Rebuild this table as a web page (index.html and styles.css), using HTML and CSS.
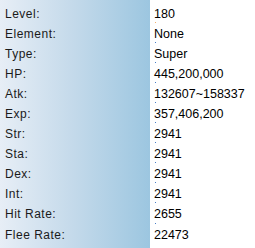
FILE: index.html
```html
<!DOCTYPE html>
<html>
<head>
<meta charset="utf-8">
<link rel="stylesheet" href="styles.css">
</head>
<body>
<div class="panel">
  <div class="labels">
    <div class="row">Level:</div>
    <div class="row">Element:</div>
    <div class="row">Type:</div>
    <div class="row">HP:</div>
    <div class="row">Atk:</div>
    <div class="row">Exp:</div>
    <div class="row">Str:</div>
    <div class="row">Sta:</div>
    <div class="row">Dex:</div>
    <div class="row">Int:</div>
    <div class="row">Hit Rate:</div>
    <div class="row">Flee Rate:</div>
  </div>
  <div class="values">
    <div class="row dot orange">180</div>
    <div class="row dot">None</div>
    <div class="row dot">Super</div>
    <div class="row dot">445,200,000</div>
    <div class="row dot">132607~158337</div>
    <div class="row dot">357,406,200</div>
    <div class="row dot">2941</div>
    <div class="row dot">2941</div>
    <div class="row dot">2941</div>
    <div class="row dot">2941</div>
    <div class="row dot">2655</div>
    <div class="row">22473</div>
  </div>
</div>
</body>
</html>
```
FILE: styles.css
```css
html, body {
  margin: 0;
  padding: 0;
  width: 255px;
  height: 248px;
  overflow: hidden;
  background: #ffffff;
}
.panel {
  display: flex;
  height: 248px;
}
.labels {
  width: 150px;
  height: 248px;
  background: linear-gradient(to right, #e7eef6 0%, #c3d9ea 50%, #9cc6e0 100%);
  padding: 3.5px 0 0 5px;
  box-sizing: border-box;
  font-family: "Liberation Sans", Arial, sans-serif;
  font-size: 12px;
  letter-spacing: 0.5px;
  color: #1a1a1a;
}
.values {
  flex: 1;
  margin-top: 2px;
  background: #ffffff;
  padding: 1.5px 0 0 4px;
  font-family: "Liberation Sans", Arial, sans-serif;
  font-size: 12.5px;
  color: #000000;
}
.row {
  height: 20.1px;
  line-height: 20.1px;
  position: relative;
}
.dot::after {
  content: "";
  position: absolute;
  left: 1px;
  bottom: 1px;
  width: 1px;
  height: 1px;
  background: #4a7fc8;
}
.orange::after {
  background: #f0b070;
}
```
